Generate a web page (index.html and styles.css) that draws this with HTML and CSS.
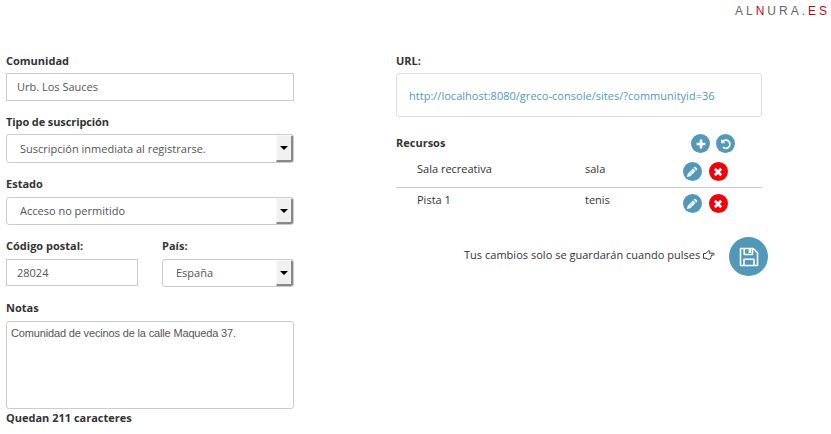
FILE: index.html
```html
<!DOCTYPE html>
<html lang="es">
<head>
<meta charset="utf-8">
<title>Alnura</title>
<link rel="stylesheet" href="styles.css">
</head>
<body>
<svg class="defs" aria-hidden="true">
  <symbol id="pencil" viewBox="0 0 12 12"><path d="M1 11l.7-3.3 5.2-5.2 2.6 2.6-5.2 5.2zM7.6 1.8l.9-.9q.5-.4 1 0l1.6 1.6q.4.5 0 1l-.9.9z" fill="#fff"/><path d="M3.4 8.1l3.7-3.7" stroke="#5299b9" stroke-width=".5"/></symbol>
  <symbol id="cross" viewBox="0 0 12 12"><path d="M2.8 2.8l6.4 6.4M9.2 2.8L2.8 9.2" stroke="#fff" stroke-width="2.7"/></symbol>
</svg>
<header class="brand"><span>AL<b>N</b>URA.<b>ES</b></span></header>
<main class="page">
  <section class="form">
    <div class="label"><span>Comunidad</span></div>
    <div class="input"><span>Urb. Los Sauces</span></div>
    <div class="label tight"><span>Tipo de suscripción</span></div>
    <div class="select tall"><span>Suscripción inmediata al registrarse.</span><i class="arrow"></i></div>
    <div class="label low"><span>Estado</span></div>
    <div class="select"><span>Acceso no permitido</span><i class="arrow"></i></div>
    <div class="pair">
      <div class="zip">
        <div class="label low"><span>Código postal:</span></div>
        <div class="input short"><span>28024</span></div>
      </div>
      <div class="country">
        <div class="label low"><span>País:</span></div>
        <div class="select"><span>España</span><i class="arrow"></i></div>
      </div>
    </div>
    <div class="label low"><span>Notas</span></div>
    <div class="notes"><span>Comunidad de vecinos de la calle Maqueda 37.</span></div>
    <div class="count"><span>Quedan 211 caracteres</span></div>
  </section>
  <section class="side">
    <div class="label"><span>URL:</span></div>
    <div class="url"><a>http://localhost:8080/greco-console/sites/?communityid=36</a></div>
    <div class="resources-head">
      <span class="title">Recursos</span>
      <span class="btn"><svg viewBox="0 0 12 12"><path d="M6 1.6v8.8M1.6 6h8.8" stroke="#fff" stroke-width="2.6"/></svg></span>
      <span class="btn"><svg viewBox="0 0 12 12"><path d="M2.5 3.8A4.1 4.1 0 1 1 3 9.2" fill="none" stroke="#fff" stroke-width="1.7"/><path d="M1.2 1v4.2h4.2z" fill="#fff"/></svg></span>
    </div>
    <div class="row">
      <span class="name">Sala recreativa</span><span class="kind">sala</span>
      <span class="btn"><svg><use href="#pencil"/></svg></span><span class="btn red"><svg><use href="#cross"/></svg></span>
    </div>
    <div class="row second">
      <span class="name">Pista 1</span><span class="kind">tenis</span>
      <span class="btn"><svg><use href="#pencil"/></svg></span><span class="btn red"><svg><use href="#cross"/></svg></span>
    </div>
    <div class="save">
      <span class="hint">Tus cambios solo se guardarán cuando pulses</span>
      <svg class="hand" viewBox="0 0 12 10"><path d="M.5 3.5H3L5.2 1q.5-.6 1.2-.3.7.4.2 1.5l-.5 1h4.2q1 .1 1 .9t-1 .9H8.4q.6 1-.3 1.5.3 1-.5 1.3.1 1.4-1.1 1.4H4.8L3 8.3H.5z" fill="none" stroke="#333" stroke-width=".95" stroke-linejoin="round"/></svg>
      <span class="disk"><svg viewBox="0 0 20 20"><path d="M1.5 1.5h12.8l4.2 4.2v12.8h-17zM5.2 1.5v6h8.3v-6M5 18.5v-6.3h10v6.3" fill="none" stroke="#fff" stroke-width="1.6" stroke-linejoin="round"/><path d="M9.6 2h2.5v4H9.6z" fill="#fff"/></svg></span>
    </div>
  </section>
</main>
</body>
</html>
```
FILE: styles.css
```css
* { box-sizing: border-box; }
body { margin: 0; background: #fff; color: #333; font: 11px/16px "Open Sans", sans-serif; white-space: nowrap; }
.defs { display: none; }
.brand { height: 53px; padding: 3px 2px 0 0; text-align: right; color: #666; font: 12px/16px "Liberation Sans", sans-serif; letter-spacing: 3px; }
.brand span { margin-right: -1px; }
.brand b { font-weight: 400; color: #d0021b; }
.page { display: flex; gap: 102px; padding-left: 6px; }
.form { width: 288px; }
.label { height: 20px; font-weight: 700; }
.label.low { height: 21px; }
.label.tight { letter-spacing: -.1px; }
.input, .select { display: flex; align-items: center; height: 28px; margin-bottom: 13px; border: 1px solid #ccc; color: #555; }
.input { padding-left: 10px; }
.input.short { height: 27px; }
.select { padding-left: 13px; border-radius: 3px; }
.select.tall { height: 29px; }
.arrow { display: flex; align-items: center; justify-content: center; align-self: stretch; width: 17px; margin-left: auto; background: #f0f0f0; border: 1px solid #f8f8f8; border-right: 2px solid #888; border-bottom: 2px solid #888; border-radius: 0 2px 2px 0; }
.arrow::after { content: ""; border: 4px solid transparent; border-top-color: #000; border-bottom: 0; }
.pair { display: flex; justify-content: space-between; }
.zip { width: 132px; }
.country { width: 132px; }
.notes { height: 88px; padding: 3px 4px; border: 1px solid #ccc; border-radius: 3px; color: #555; font-family: "Liberation Sans", sans-serif; letter-spacing: -.155px; }
.count { padding-top: 1px; font-weight: 700; }
.side { width: 366px; }
.url { height: 44px; padding: 14px 12px; border: 1px solid #ddd; border-radius: 3px; }
.url a { color: #5299b9; letter-spacing: .02px; }
.resources-head { display: flex; align-items: center; height: 20px; margin-top: 16px; padding-right: 27px; }
.title { margin-right: auto; font-weight: 700; }
.btn { display: flex; align-items: center; justify-content: center; width: 19px; height: 19px; border-radius: 50%; background: #5299b9; }
.resources-head .btn { margin-top: 1px; }
.resources-head .btn + .btn { margin-left: 6px; }
.btn.red { margin-left: 7px; background: #f40009; }
.btn svg { width: 12px; height: 12px; }
.row { display: flex; height: 35px; padding: 8px 0 0 21px; border-bottom: 1px solid #ccc; }
.row .btn { margin-top: 1px; }
.name { width: 168px; }
.kind { width: 97.5px; }
.row.second { height: 43px; padding-top: 4px; border: 0; }
.row.second .btn { margin-top: 2px; }
.save { display: flex; align-items: center; height: 39px; margin-top: 6px; padding-left: 68px; }
.hint { margin-top: -4px; letter-spacing: .02px; }
.hand { width: 12px; height: 10px; margin: -3px 0 0 3px; }
.disk { display: flex; align-items: center; justify-content: center; width: 39px; height: 39px; margin: 0 -6px 0 auto; border-radius: 50%; background: #5299b9; }
.disk svg { width: 20px; height: 20px; }
```
